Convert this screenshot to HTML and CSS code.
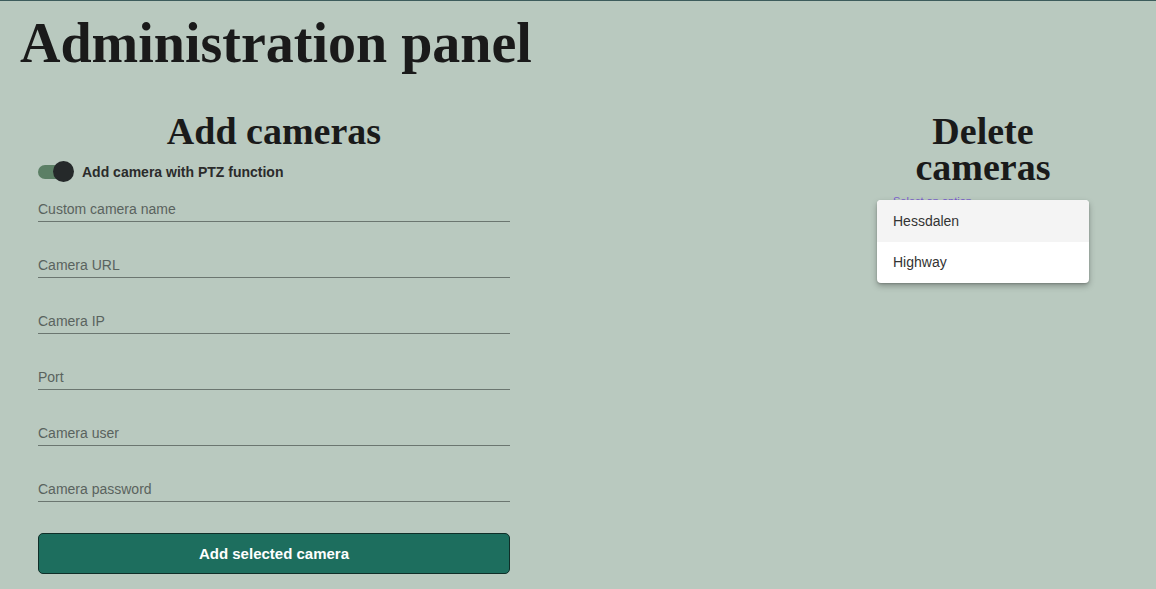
FILE: index.html
```html
<!DOCTYPE html>
<html lang="en">
<head>
<meta charset="utf-8">
<title>Administration panel</title>
<link rel="stylesheet" href="styles.css">
</head>
<body>
<div class="page">
  <h1 class="title">Administration panel</h1>
  <div class="columns">
    <section class="add-col">
      <h2 class="section-title">Add cameras</h2>
      <label class="switch-row">
        <span class="switch"><span class="switch-track"></span><span class="switch-knob"></span></span>
        <span class="switch-label">Add camera with PTZ function</span>
      </label>
      <div class="fields">
        <input class="field" type="text" placeholder="Custom camera name">
        <input class="field" type="text" placeholder="Camera URL">
        <input class="field" type="text" placeholder="Camera IP">
        <input class="field" type="text" placeholder="Port">
        <input class="field" type="text" placeholder="Camera user">
        <input class="field" type="password" placeholder="Camera password">
      </div>
      <button class="add-btn" type="button">Add selected camera</button>
    </section>
    <section class="delete-col">
      <h2 class="section-title">Delete cameras</h2>
      <div class="select-wrap">
        <span class="select-label">Select an option</span>
        <ul class="menu">
          <li class="menu-item active">Hessdalen</li>
          <li class="menu-item">Highway</li>
        </ul>
      </div>
    </section>
  </div>
</div>
</body>
</html>
```
FILE: styles.css
```css
html, body {
  margin: 0;
  padding: 0;
}
body {
  background: #b9c9bf;
  border-top: 1px solid #3d5c5c;
  font-family: "Liberation Sans", Arial, sans-serif;
  height: 588px;
  overflow: hidden;
}
.page {
  padding: 0 20px;
}
.title {
  font-family: "Liberation Serif", "Times New Roman", serif;
  font-weight: bold;
  font-size: 56px;
  line-height: 64px;
  color: #1a1a1a;
  margin: 10px 0 0 0;
}
.columns {
  display: flex;
  align-items: flex-start;
  margin-top: 38px;
}
.add-col {
  width: 472px;
  margin-left: 18px;
  display: flex;
  flex-direction: column;
}
.section-title {
  font-family: "Liberation Serif", "Times New Roman", serif;
  font-weight: bold;
  font-size: 38px;
  line-height: 36px;
  color: #1a1a1a;
  text-align: center;
  margin: 0;
}
.switch-row {
  display: flex;
  align-items: center;
  gap: 8px;
  margin-top: 12px;
  height: 22px;
}
.switch {
  position: relative;
  width: 36px;
  height: 22px;
  flex: none;
}
.switch-track {
  position: absolute;
  left: 0;
  top: 4px;
  width: 30px;
  height: 14px;
  border-radius: 7px;
  background: #5b7f65;
}
.switch-knob {
  position: absolute;
  right: 0;
  top: 0;
  width: 21px;
  height: 21px;
  border-radius: 50%;
  background: #25292a;
}
.switch-label {
  font-weight: bold;
  font-size: 14px;
  color: #2b2b2b;
}
.fields {
  display: flex;
  flex-direction: column;
  gap: 23px;
  margin-top: 6px;
}
.field {
  display: block;
  width: 100%;
  box-sizing: border-box;
  height: 33px;
  border: none;
  border-bottom: 1px solid #6b7670;
  background: transparent;
  font-family: "Liberation Sans", Arial, sans-serif;
  font-size: 14px;
  color: #333;
  padding: 8px 0 0 0;
  outline: none;
}
.field::placeholder {
  color: #59635e;
  opacity: 1;
}
.add-btn {
  margin-top: 31px;
  height: 41px;
  width: 100%;
  background: #1d6e5e;
  border: 1px solid #0f2e28;
  border-radius: 5px;
  color: #ffffff;
  font-family: "Liberation Sans", Arial, sans-serif;
  font-weight: bold;
  font-size: 15px;
}
.delete-col {
  width: 212px;
  margin-left: auto;
  margin-right: 47px;
}
.select-wrap {
  position: relative;
  margin-top: 6px;
  padding-left: 16px;
  height: 14px;
}
.select-label {
  font-size: 11px;
  line-height: 14px;
  color: #7b5ed0;
}
.menu {
  position: absolute;
  left: 0;
  top: 9px;
  width: 212px;
  margin: 0;
  padding: 0;
  list-style: none;
  background: #ffffff;
  border-radius: 4px;
  box-shadow: 0 3px 6px rgba(0, 0, 0, 0.28), 0 1px 2px rgba(0, 0, 0, 0.18);
  overflow: hidden;
}
.menu-item {
  height: 42px;
  line-height: 42px;
  padding-left: 16px;
  font-size: 14px;
  color: #333333;
}
.menu-item + .menu-item {
  height: 41px;
  line-height: 41px;
}
.menu-item.active {
  background: #f4f4f4;
}
```
